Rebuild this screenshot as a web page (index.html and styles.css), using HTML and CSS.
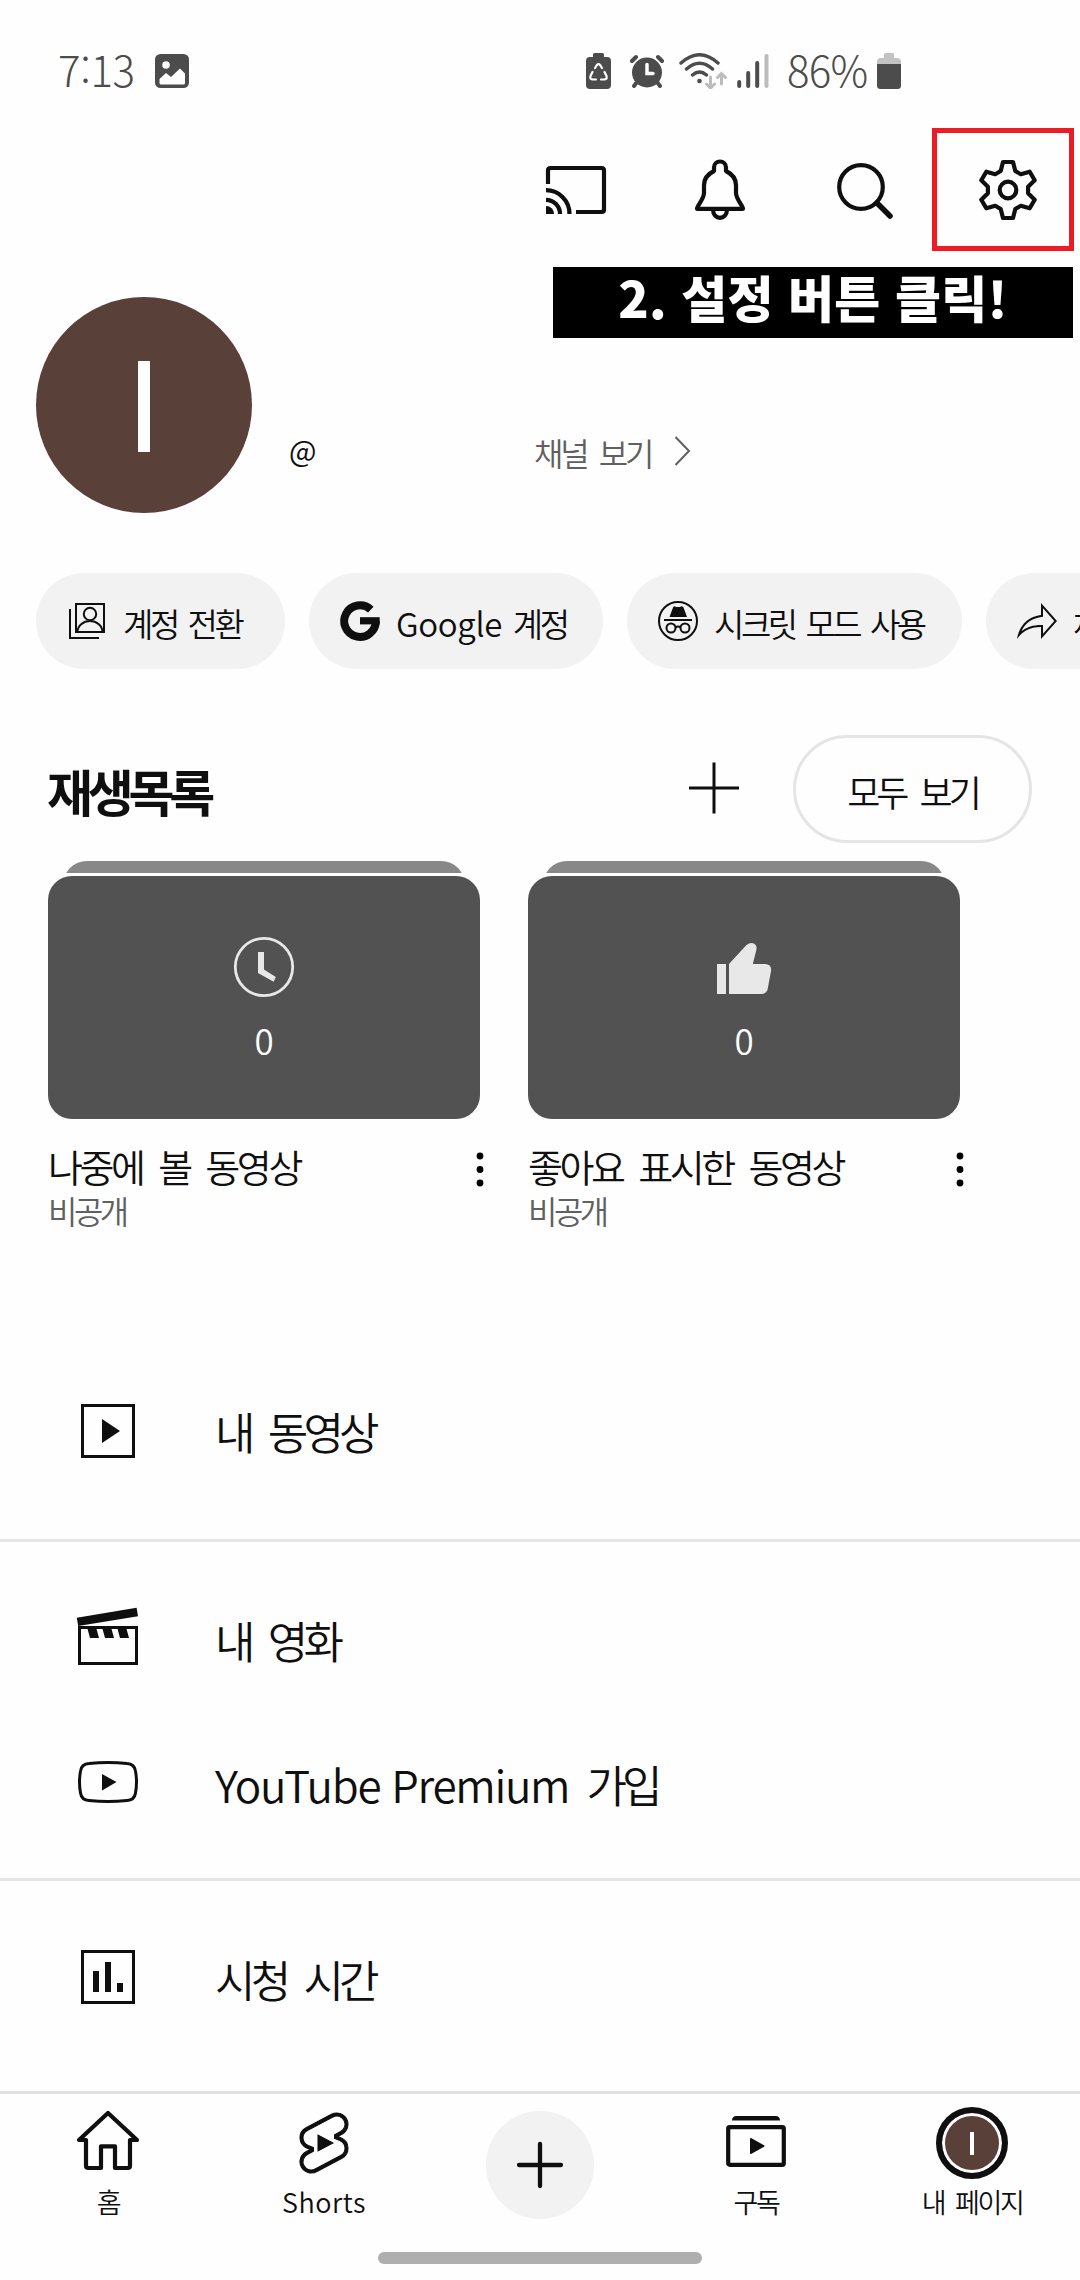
FILE: index.html
```
<!DOCTYPE html>
<html lang="ko">
<head>
  <meta charset="UTF-8" />
  <meta name="viewport" content="width=device-width, initial-scale=1.0"/>
  <title>내 페이지</title>
  <link rel="stylesheet" href="styles.css">
</head>
<body>
  <div class="status-bar">
    <span class="clock">7:13</span>
    <svg class="photo" width="34" height="34" viewBox="0 0 34 34">
      <rect width="34" height="34" rx="5.5" fill="#4c4c4c"/>
      <circle cx="11" cy="11" r="3.8" fill="#fefefe"/>
      <path d="M4.5 25 L11 19 L16 23 L25 14.5 L30 19.5 V29 Q30 30.5 28.5 30.5 H6 Q4.5 30.5 4.5 29Z" fill="#fefefe"/>
    </svg>
    <div class="status-right">
      <svg class="saver" width="25" height="36" viewBox="0 0 25 36">
        <path d="M7 4V1.500Q7 0 8.500 0H16.500Q18 0 18 1.500V4H21Q25 4 25 8V32Q25 36 21 36H4Q0 36 0 32V8Q0 4 4 4Z" fill="#4c4c4c"/>
        <path d="M9 15 L11 12 Q12.500 10 14 12 L16 15 M18.500 19 L20.500 23 Q21.500 26.500 18 26.500 H15 M10 26.500 H7 Q3.500 26.500 4.500 23 L6.500 19" fill="none" stroke="#fefefe" stroke-width="2.200" stroke-linecap="round"/>
      </svg>
      <svg class="alarm" width="34" height="34" viewBox="0 0 34 34">
        <circle cx="17" cy="18.500" r="15" fill="#4c4c4c"/>
        <path d="M2 7 L6 3 M32 7 L28 3 M7 28 L4 32 M27 28 L30 32" stroke="#4c4c4c" stroke-width="4" stroke-linecap="round"/>
        <path d="M17 10.500V19.500H23" fill="none" stroke="#fefefe" stroke-width="3.500" stroke-linecap="round"/>
      </svg>
      <svg class="wifi" width="48" height="36" viewBox="0 0 48 36">
        <path d="M2 10 Q20.500 -6.500 39 10 M7.500 16 Q20.500 4.500 33.500 16 M13.500 22 Q20.500 16 27.500 22" fill="none" stroke="#4c4c4c" stroke-width="3.400" stroke-linecap="round"/>
        <circle cx="20.500" cy="28" r="2.300" fill="#4c4c4c"/>
        <path d="M31.500 24V34 M27.500 31 L31.500 35 L35.500 31 M42.500 31V21 M38.500 24.500 L42.500 20.500 L46.500 24.500" fill="none" stroke="#bcbcbc" stroke-width="3" stroke-linecap="round"/>
      </svg>
      <svg class="signal" width="32" height="36" viewBox="0 0 32 36">
        <path d="M2.200 29V33 M11.200 20V33 M20.200 10V33" stroke="#4c4c4c" stroke-width="4" stroke-linecap="round"/>
        <path d="M29.500 3V33" stroke="#bcbcbc" stroke-width="4" stroke-linecap="round"/>
      </svg>
      <span class="percent">86%</span>
      <svg class="battery" width="24" height="36" viewBox="0 0 24 36">
        <path d="M7 5V1.500Q7 0 8.500 0H15.500Q17 0 17 1.500V5H20Q24 5 24 9V12H0V9Q0 5 4 5Z" fill="#c2c2c2"/>
        <path d="M0 11H24V32.500Q24 36 20.500 36H3.500Q0 36 0 32.500Z" fill="#4c4c4c"/>
      </svg>
    </div>
  </div>

  <div class="toolbar">
    <svg class="icon line" viewBox="0 0 72 72">
      <path d="M8 30V16.500Q8 14 10.500 14H61.500Q64 14 64 16.500V55.500Q64 58 61.500 58H36"/>
      <path d="M6 36.200A23.500 23.500 0 0 1 29.500 60 M6 45.800A14 14 0 0 1 20 60"/>
      <path d="M6 52A8 8 0 0 1 14 60H6Z" class="solid"/>
    </svg>
    <svg class="icon line" viewBox="0 0 72 72">
      <path d="M30 17V13.500A6 6 0 0 1 42 13.500V17C48 20 52 25 52 31V39C52 45 59 52 59 54.800H13C13 52 20 45 20 39V31C20 25 24 20 30 17Z"/>
      <path d="M29.200 57A6.800 6.800 0 0 0 42.800 57"/>
    </svg>
    <svg class="icon line" viewBox="0 0 72 72">
      <circle cx="33" cy="33" r="21.800"/>
      <path d="M49 49L62 62" stroke-width="5.500" stroke-linecap="round"/>
    </svg>
    <svg class="icon line" viewBox="0 0 72 72">
      <path d="M31 8L41 8L43.300 17L48.800 20.200L57.700 17.700L62.700 26.300L56.100 32.800L56.100 39.200L62.700 45.700L57.700 54.300L48.800 51.800L43.300 55L41 64L31 64L28.700 55L23.200 51.800L14.300 54.300L9.300 45.700L15.900 39.200L15.900 32.800L9.300 26.300L14.300 17.700L23.200 20.200L28.700 17Z"/>
      <circle cx="36" cy="36" r="8.300"/>
    </svg>
  </div>
  <!-- highlight around the settings button -->
  <div class="highlight"></div>
  <div class="callout">2. 설정 버튼 클릭!</div>

  <div class="profile">
    <div class="avatar"><span class="avatar-mark"></span></div>
    <span class="handle">@</span>
    <a class="channel-link">채널 보기</a>
    <svg class="chevron" width="17" height="30" viewBox="0 0 17 30">
      <path d="M1.500 1L15 15L1.500 29" fill="none" stroke="#606060" stroke-width="2"/>
    </svg>
  </div>

  <div class="chips">
    <div class="chip chip-switch">
      <svg class="chip-icon" viewBox="0 0 48 48" fill="none" stroke="#0f0f0f" stroke-width="2">
        <rect x="13" y="7" width="28" height="28"/>
        <path d="M7 12V41H36 M14.500 35A12.500 11 0 0 1 39.500 35"/>
        <circle cx="27" cy="17" r="6.200"/>
      </svg>
      <span>계정 전환</span>
    </div>
    <div class="chip chip-google">
      <svg class="chip-icon" viewBox="0 0 48 48">
        <path d="M34.800 12.600A15.800 15.800 0 1 0 39.800 24" fill="none" stroke="#0f0f0f" stroke-width="8"/>
        <rect x="24" y="20.200" width="19.700" height="7.200" fill="#0f0f0f"/>
      </svg>
      <span><span class="latin">Google</span> 계정</span>
    </div>
    <div class="chip chip-incognito">
      <svg class="chip-icon" viewBox="0 0 48 48" fill="none" stroke="#0f0f0f" stroke-width="2">
        <circle cx="24" cy="24" r="19"/>
        <path d="M15.500 20L19 10.500Q20.500 8.500 22 10H26Q28 8.500 29.500 10.500L33 20Z" fill="#0f0f0f" stroke="none"/>
        <path d="M10 23H38M21.500 30.500Q24 28.500 26.500 30.500"/>
        <circle cx="17" cy="31" r="4.500"/>
        <circle cx="31" cy="31" r="4.500"/>
      </svg>
      <span>시크릿 모드 사용</span>
    </div>
    <div class="chip chip-share">
      <svg class="chip-icon" viewBox="0 0 24 24" fill="#0f0f0f">
        <path d="M15 5.630 20.660 12 15 18.370V14h-1c-3.960 0-7.140 1-9.750 3.090 1.840-4.070 5.110-6.400 9.890-7.100l.86-.13V5.630M14 3v6C6.220 10.130 3.110 15.330 2 21c2.780-3.970 6.440-6 12-6v6l8-9-8-9z"/>
      </svg>
      <span>채널 공유</span>
    </div>
  </div>

  <div class="playlist-header">
    <h2>재생목록</h2>
    <svg class="icon add" viewBox="0 0 72 72">
      <path d="M36 10.500V61.500M11 36H61" stroke="#0f0f0f" stroke-width="3"/>
    </svg>
    <button class="view-all">모두 보기</button>
  </div>

  <div class="playlists">
    <div class="playlist">
      <div class="stack"></div>
      <div class="thumb">
        <svg class="icon" viewBox="0 0 72 72">
          <circle cx="36" cy="36" r="28.700" fill="none" stroke="#e8e8e8" stroke-width="2.800"/>
          <path d="M30 21H36V38.600L47.800 46L45.700 50.800L30 42Z" fill="#e8e8e8"/>
        </svg>
        <span>0</span>
      </div>
      <div class="meta">
        <div>
          <div class="title">나중에 볼 동영상</div>
          <div class="privacy">비공개</div>
        </div>
        <svg class="dots" width="8" height="36" viewBox="0 0 8 36">
          <circle cx="4" cy="4" r="3.400"/><circle cx="4" cy="17.500" r="3.400"/><circle cx="4" cy="31" r="3.400"/>
        </svg>
      </div>
    </div>
    <div class="playlist">
      <div class="stack"></div>
      <div class="thumb">
        <svg class="icon" viewBox="0 0 72 72" fill="#e8e8e8">
          <path d="M9 33H18V63H9Z"/>
          <path d="M21 33L38 14.500Q41 11 45 12.200Q49.500 13.500 48.300 19L44.800 33H57Q64 33.500 63 40L59.800 57.500Q58.800 63 53 63H21Z"/>
        </svg>
        <span>0</span>
      </div>
      <div class="meta">
        <div>
          <div class="title">좋아요 표시한 동영상</div>
          <div class="privacy">비공개</div>
        </div>
        <svg class="dots" width="8" height="36" viewBox="0 0 8 36">
          <circle cx="4" cy="4" r="3.400"/><circle cx="4" cy="17.500" r="3.400"/><circle cx="4" cy="31" r="3.400"/>
        </svg>
      </div>
    </div>
  </div>

  <div class="menu">
    <div class="menu-group videos">
      <div class="menu-item">
        <svg class="icon" viewBox="0 0 72 72">
          <rect x="10.500" y="10.500" width="51" height="51" fill="none" stroke="#0f0f0f" stroke-width="3"/>
          <path d="M30 24L48 36L30 48Z" fill="#0f0f0f"/>
        </svg>
        <span>내 동영상</span>
      </div>
    </div>
    <div class="menu-group">
      <div class="menu-item">
        <svg class="icon" viewBox="0 0 72 72" fill="#0f0f0f">
          <path d="M4.800 15.700L64.600 5.700L66 14.200L6.200 24Z"/>
          <rect x="7.500" y="25.500" width="57" height="36" fill="none" stroke="#0f0f0f" stroke-width="3"/>
          <path d="M15 25H24L27 36H18Z M30 25H39L42 36H33Z M45 25H54L57 36H48Z"/>
        </svg>
        <span>내 영화</span>
      </div>
      <div class="menu-item">
        <svg class="icon" viewBox="0 0 72 72">
          <path d="M17 17.500Q36 15.500 55 17.500Q62.500 18 63.500 25Q65.500 36 63.500 47Q62.500 54 55 54.500Q36 56.500 17 54.500Q9.500 54 8.500 47Q6.500 36 8.500 25Q9.500 18 17 17.500Z" fill="none" stroke="#0f0f0f" stroke-width="3"/>
          <path d="M30 28L44.500 36L30 44.500Z" fill="#0f0f0f"/>
        </svg>
        <span><span class="latin">YouTube Premium</span> 가입</span>
      </div>
    </div>
    <div class="menu-group">
      <div class="menu-item">
        <svg class="icon" viewBox="0 0 72 72">
          <rect x="10.500" y="10.500" width="51" height="51" fill="none" stroke="#0f0f0f" stroke-width="3"/>
          <path d="M21 30H27V51H21Z M33 21H39V51H33Z M45 42H51V51H45Z" fill="#0f0f0f"/>
        </svg>
        <span>시청 시간</span>
      </div>
    </div>
  </div>

  <div class="bottom-nav">
    <div class="nav-item">
      <svg class="icon line" viewBox="0 0 72 72">
        <path d="M7 33L36 6L65 33H58V58.500Q58 61 55.500 61H43V39.300H29V61H16.500Q14 61 14 58.500V33Z"/>
      </svg>
      <span>홈</span>
    </div>
    <div class="nav-item">
      <svg class="icon shorts" viewBox="0 0 24 24">
        <path d="M10 14.650v-5.300L15 12l-5 2.650zm7.770-4.330-1.200-.5L18 9.060c1.840-.96 2.530-3.230 1.560-5.060s-3.240-2.530-5.070-1.560L6 6.940c-1.290.68-2.070 2.040-2 3.490.07 1.420.93 2.670 2.220 3.250.03.01 1.200.5 1.200.5L6 14.930c-1.830.97-2.530 3.240-1.560 5.070.97 1.830 3.240 2.530 5.070 1.560l8.500-4.500c1.290-.68 2.060-2.040 1.990-3.490-.07-1.420-.94-2.680-2.230-3.250zm-.23 5.860-8.500 4.500c-1.340.71-3.010.2-3.720-1.140-.71-1.340-.2-3.010 1.140-3.720l2.040-1.080v-1.210l-.69-.28-1.110-.46c-.99-.41-1.650-1.350-1.700-2.410-.05-1.060.52-2.060 1.460-2.560l8.500-4.500c1.340-.71 3.010-.2 3.720 1.140.71 1.340.2 3.010-1.140 3.720L15.500 9.260v1.210l1.800.74c.99.41 1.650 1.350 1.700 2.410.05 1.060-.52 2.060-1.460 2.560z"/>
      </svg>
      <span class="shorts-label">Shorts</span>
    </div>
    <div class="nav-item">
      <div class="create">
        <svg width="108" height="108" viewBox="0 0 108 108">
          <path d="M54 33V75M33 54H75" stroke="#0f0f0f" stroke-width="4.300" stroke-linecap="round"/>
        </svg>
      </div>
    </div>
    <div class="nav-item">
      <svg class="icon line" viewBox="0 0 72 72">
        <path d="M12 13.500Q12 9 16.500 9H55.500Q60 9 60 13.500Z" class="solid"/>
        <rect x="8.200" y="20.200" width="55.600" height="37.600" rx="1.500"/>
        <path d="M31 32L43.500 39L31 46Z" fill="#0f0f0f" stroke-width="2" stroke-linejoin="round"/>
      </svg>
      <span>구독</span>
    </div>
    <div class="nav-item">
      <div class="nav-avatar"><span class="avatar-mark"></span></div>
      <span>내 페이지</span>
    </div>
  </div>
  <div class="home-handle"></div>
</body>
</html>
```
FILE: styles.css
```
* {
  box-sizing: border-box;
}
body {
  font-family: "Noto Sans CJK KR", "Noto Sans", sans-serif;
  font-weight: 350;
  background: #fefefe;
  color: #0f0f0f;
  margin: 0;
  width: 1080px;
  height: 2280px;
  display: flex;
  flex-direction: column;
  position: relative;
  overflow: hidden;
  white-space: nowrap;
}
svg {
  display: block;
  flex: none;
}
.icon {
  width: 72px;
  height: 72px;
}
.line {
  fill: none;
  stroke: #0f0f0f;
  stroke-width: 4.2;
  stroke-linejoin: round;
}
.solid {
  fill: #0f0f0f;
  stroke: none;
}
.latin {
  letter-spacing: -0.03em;
  word-spacing: 0;
}

/* status bar */
.status-bar {
  display: flex;
  align-items: center;
  height: 142px;
  padding: 0 179px 0 58px;
  color: #4c4c4c;
  font-size: 42px;
  font-weight: 300;
  line-height: 42px;
}
.clock {
  width: 97px;
  margin-top: -5px;
  letter-spacing: -0.3px;
}
.status-right {
  display: flex;
  align-items: center;
  margin-left: auto;
}
.alarm {
  margin-left: 19px;
}
.wifi {
  margin-left: 15px;
}
.signal {
  margin-left: 10px;
}
.percent {
  width: 90px;
  margin: -5px 0 0 18px;
  letter-spacing: -0.7px;
}

/* toolbar */
.toolbar {
  display: flex;
  justify-content: flex-end;
  align-items: center;
  gap: 72px;
  height: 95px;
  padding-right: 36px;
}
.highlight {
  position: absolute;
  left: 932px;
  top: 128px;
  width: 142px;
  height: 123px;
  border: 5px solid #ed1c24;
}
.callout {
  position: absolute;
  left: 553px;
  top: 267px;
  width: 520px;
  height: 71px;
  background: #000;
  color: #fff;
  font-size: 50px;
  font-weight: 900;
  line-height: 58px;
  letter-spacing: 0.3px;
  text-align: center;
}

/* profile */
.profile {
  display: flex;
  align-items: center;
  height: 216px;
  margin-top: 60px;
  padding-left: 36px;
}
.avatar {
  display: flex;
  align-items: center;
  justify-content: center;
  width: 216px;
  height: 216px;
  border-radius: 50%;
  background: #594038;
}
.avatar-mark {
  width: 12px;
  height: 91px;
  background: #fefefe;
}
.avatar .avatar-mark {
  margin-top: 3px;
}
.handle {
  width: 245px;
  margin: 88px 0 0 37px;
  font-size: 29px;
  font-weight: 400;
  line-height: 32px;
}
.channel-link {
  width: 140px;
  margin-top: 93px;
  color: #606060;
  font-size: 32px;
  line-height: 36px;
  letter-spacing: -0.1em;
  word-spacing: 0.2em;
}
.chevron {
  margin-top: 92px;
}

/* chips */
.chips {
  display: flex;
  gap: 24px;
  margin-top: 60px;
  padding-left: 36px;
  overflow: hidden;
}
.chip {
  display: flex;
  flex: none;
  align-items: center;
  gap: 12px;
  height: 96px;
  padding-left: 27px;
  border-radius: 48px;
  background: #f2f2f2;
  font-size: 33px;
}
.chip > span {
  margin-top: 3px;
  letter-spacing: -0.105em;
  word-spacing: 0.15em;
}
.chip .latin {
  letter-spacing: -0.01em;
}
.chip-icon {
  width: 48px;
  height: 48px;
}
.chip-switch {
  width: 249px;
}
.chip-google {
  width: 294px;
}
.chip-incognito {
  width: 335px;
}
.chip-share {
  width: 249px;
}

/* playlists */
.playlist-header {
  display: flex;
  align-items: center;
  height: 108px;
  margin-top: 66px;
  padding: 0 48px;
}
h2 {
  margin: 1px auto 0 -1px;
  font-size: 50px;
  font-weight: 700;
  letter-spacing: -0.105em;
}
.add {
  margin: -3px 43px 0 0;
}
.view-all {
  width: 239px;
  height: 108px;
  padding: 3px 0 0;
  border: 3px solid #e5e5e5;
  border-radius: 54px;
  background: none;
  color: inherit;
  font: inherit;
  font-size: 36px;
  letter-spacing: -0.11em;
  word-spacing: 0.22em;
}
.playlists {
  display: flex;
  gap: 48px;
  height: 498px;
  margin-top: 18px;
  padding-left: 48px;
}
.playlist {
  width: 432px;
}
.stack {
  height: 12px;
  margin: 0 15px 3px;
  overflow: hidden;
}
.stack::before {
  content: "";
  display: block;
  height: 60px;
  border-radius: 24px;
  background: #888;
}
.thumb {
  display: flex;
  flex-direction: column;
  align-items: center;
  height: 243px;
  padding-top: 55px;
  border-radius: 24px;
  background: #525252;
  color: #fefefe;
  font-size: 35px;
  line-height: 40px;
}
.thumb span {
  margin-top: 17px;
}
.meta {
  display: flex;
  justify-content: space-between;
  margin: 25px -4px 0 0;
  line-height: 44px;
}
.title {
  font-size: 38px;
  letter-spacing: -0.09em;
  word-spacing: 0.22em;
}
.privacy {
  color: #606060;
  font-size: 32px;
  letter-spacing: -0.11em;
}
.dots {
  margin-top: 8px;
}

/* menu */
.menu-group {
  padding: 24px 0;
  border-bottom: 3px solid #e5e5e5;
  font-size: 44px;
}
.menu-group.videos {
  padding: 0 0 36px;
}
.menu-group:last-child {
  border: none;
}
.menu-item {
  display: flex;
  align-items: center;
  gap: 71px;
  height: 144px;
  padding-left: 72px;
}
.menu-item > span {
  margin-top: 4px;
  letter-spacing: -0.11em;
  word-spacing: 0.22em;
}
.menu-item .latin {
  letter-spacing: -0.03em;
  word-spacing: 0;
}
.videos .menu-item > span {
  margin-top: -1px;
}

/* bottom nav */
.bottom-nav {
  position: absolute;
  left: 0;
  top: 2091px;
  display: grid;
  grid-template-columns: repeat(5, 1fr);
  width: 1080px;
  height: 189px;
  padding-top: 13px;
  border-top: 3px solid #e0e0e0;
  background: #fefefe;
}
.nav-item {
  display: flex;
  flex-direction: column;
  align-items: center;
  font-size: 27px;
  line-height: 30px;
}
.nav-item > span {
  margin-top: 8px;
  letter-spacing: -0.09em;
  word-spacing: 0.22em;
}
.nav-item .shorts-label {
  letter-spacing: 0.02em;
}
.nav-item .shorts {
  fill: #0f0f0f;
  stroke: #0f0f0f;
  stroke-width: 0.35;
}
.create {
  width: 108px;
  height: 108px;
  margin-top: 4px;
  border-radius: 50%;
  background: #f2f2f2;
}
.nav-avatar {
  display: flex;
  align-items: center;
  justify-content: center;
  width: 72px;
  height: 72px;
  border: 6px solid #0f0f0f;
  border-radius: 50%;
  background: #594038;
  box-shadow: inset 0 0 0 3px #fefefe;
}
.nav-avatar .avatar-mark {
  width: 4px;
  height: 23px;
}
.home-handle {
  position: absolute;
  left: 378px;
  top: 2252px;
  width: 324px;
  height: 12px;
  border-radius: 6px;
  background: #afafaf;
}
```
